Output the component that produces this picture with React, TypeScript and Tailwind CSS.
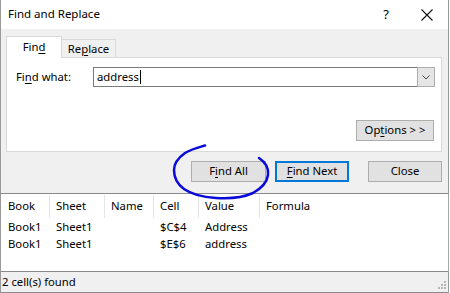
import React from "react";

const U = ({ children }: { children: React.ReactNode }) => (
  <span className="underline underline-offset-[2px] decoration-[1px]">{children}</span>
);

function Btn({
  children,
  w,
  primary,
}: {
  children: React.ReactNode;
  w: string;
  primary?: boolean;
}) {
  return (
    <div
      className={`${w} h-[21px] flex items-center justify-center bg-[#e1e1e1] text-[#000] ${
        primary ? "border-2 border-[#0078d7]" : "border border-[#adadad]"
      }`}
    >
      {children}
    </div>
  );
}

export default function App() {
  return (
    <div
      className="relative w-[450px] h-[293px] bg-white overflow-hidden text-[11.3px] text-black"
      style={{ fontFamily: '"Noto Sans", "Liberation Sans", sans-serif' }}
    >
      <div className="w-[449px] h-[293px] flex flex-col border-l border-r border-[#9a9a9a]">
        {/* title bar */}
        <div className="h-[29px] shrink-0 bg-white flex items-center">
          <div className="pl-[7px] text-[11.5px] leading-none pb-[1px]">Find and Replace</div>
          <div className="flex-1" />
          <div className="text-[13px] leading-none mr-[32px] pb-[1px]">?</div>
          <svg width="12" height="12" viewBox="0 0 12 12" className="mr-[15px]">
            <path d="M0.5 0.5 L11.5 11.5 M11.5 0.5 L0.5 11.5" stroke="#111" strokeWidth="1.1" fill="none" />
          </svg>
        </div>

        {/* body */}
        <div className="h-[164px] shrink-0 bg-[#f0f0f0] flex flex-col pt-[7px]">
          {/* tabs */}
          <div className="flex items-end h-[21px] pl-[5px] relative z-10">
            <div className="w-[56px] h-[22px] bg-white border border-b-0 border-[#d9d9d9] flex items-center justify-center -mb-[1px]">
              <span>
                Fin<U>d</U>
              </span>
            </div>
            <div className="w-[54px] h-[18px] bg-[#f0f0f0] border border-l-0 border-b-0 border-[#d9d9d9] flex items-center justify-center pt-[1px]">
              <span>
                Re<U>p</U>lace
              </span>
            </div>
          </div>
          {/* panel */}
          <div className="ml-[5px] w-[436px] h-[95px] bg-white border border-[#d9d9d9] flex flex-col">
            <div className="flex items-center mt-[9px] h-[20px]">
              <div className="w-[86px] pl-[9px]">
                Fi<U>n</U>d what:
              </div>
              <div className="w-[342px] h-[20px] border border-[#7a7a7a] flex items-center">
                <div className="flex-1 pl-[3px] flex items-center">
                  <span>address</span>
                  <span className="inline-block w-[1px] h-[14px] bg-black ml-[1px]" />
                </div>
                <div className="w-[18px] h-[20px] -mr-[1px] bg-[#e5e5e5] border border-[#adadad] flex items-center justify-center">
                  <svg width="8" height="5" viewBox="0 0 8 5">
                    <path d="M0.5 0.5 L4 4 L7.5 0.5" stroke="#444" strokeWidth="1" fill="none" />
                  </svg>
                </div>
              </div>
            </div>
            <div className="flex-1" />
            <div className="flex justify-end pr-[7px] mb-[10px]">
              <Btn w="w-[78px]">
                <span>
                  Op<U>t</U>ions &gt; &gt;
                </span>
              </Btn>
            </div>
          </div>
          {/* buttons */}
          <div className="flex justify-end mt-[9px] pr-[6px]">
            <Btn w="w-[75px]">
              <span>
                F<U>i</U>nd All
              </span>
            </Btn>
            <div className="w-[9px]" />
            <Btn w="w-[74px]" primary>
              <span>
                <U>F</U>ind Next
              </span>
            </Btn>
            <div className="w-[19px]" />
            <Btn w="w-[74px]">
              <span>Close</span>
            </Btn>
          </div>
        </div>

        {/* results list */}
        <div className="h-[78px] shrink-0 bg-white border-t border-[#8a8a8a] flex flex-col border-r border-r-[#a8a8a8] -mr-[1px]">
          <div className="grid grid-cols-[49px_55px_49px_45px_61px_1fr] h-[24px] pt-[1px]">
            {["Book", "Sheet", "Name", "Cell", "Value", "Formula"].map((h, i) => (
              <div
                key={h}
                className={`flex items-center ${i === 0 ? "pl-[7px]" : "pl-[6px]"} ${
                  i < 5 ? "border-r border-[#e5e5e5]" : ""
                }`}
              >
                {h}
              </div>
            ))}
          </div>
          {[
            ["Book1", "Sheet1", "", "$C$4", "Address", ""],
            ["Book1", "Sheet1", "", "$E$6", "address", ""],
          ].map((r, ri) => (
            <div
              key={ri}
              className={`grid grid-cols-[49px_55px_49px_45px_61px_1fr] h-[17px] ${ri === 0 ? "mt-[1px]" : ""}`}
            >
              {r.map((c, i) => (
                <div key={i} className={`flex items-center ${i === 0 ? "pl-[7px]" : "pl-[6px]"}`}>
                  {c}
                </div>
              ))}
            </div>
          ))}
        </div>

        {/* status bar */}
        <div className="h-[21px] shrink-0 bg-[#f0f0f0] border-t border-[#8a8a8a] relative flex items-center">
          <div className="pl-[1px]">2 cell(s) found</div>
          <svg width="9" height="9" viewBox="0 0 9 9" className="absolute right-[1px] bottom-[2px]">
            <g fill="#b8b8b8">
              <rect x="6" y="0" width="2" height="2" />
              <rect x="3" y="3" width="2" height="2" />
              <rect x="6" y="3" width="2" height="2" />
              <rect x="0" y="6" width="2" height="2" />
              <rect x="3" y="6" width="2" height="2" />
              <rect x="6" y="6" width="2" height="2" />
            </g>
          </svg>
        </div>
        <div className="flex-1 bg-[#8a8a8a]" />
      </div>

      {/* hand-drawn circle */}
      <svg width="450" height="293" viewBox="0 0 450 293" className="absolute left-0 top-0 pointer-events-none">
        <path
          d="M205 145.5 C200 147 192 149 185 153 C178 158 174 163 174 170 C174 178 177 184 184 189 C191 194 202 197 216 198 C230 199 244 197 253 193 C262 188 267 182 268 175 C269 168 265 162 259 158"
          stroke="#0a0ad8"
          strokeWidth="2.5"
          fill="none"
          strokeLinecap="round"
        />
      </svg>
    </div>
  );
}
